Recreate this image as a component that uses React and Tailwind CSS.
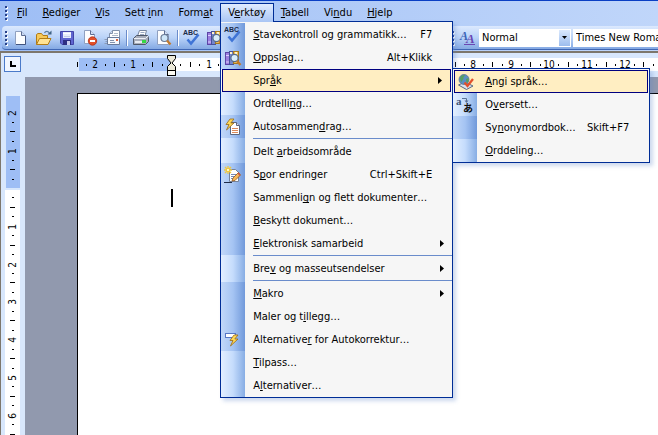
import React from "react";

const INK = "#000";

/* Text with an underlined access key: the letter after "&" is underlined. */
function Label({ text }) {
  const at = text.indexOf("&");
  if (at < 0) return <span>{text}</span>;
  return (
    <span>
      {text.slice(0, at)}
      <span className="underline decoration-1 underline-offset-1 [text-decoration-skip-ink:none]">{text[at + 1]}</span>
      {text.slice(at + 2)}
    </span>
  );
}

function Icon({ children }) {
  return (
    <svg width="16" height="16" viewBox="0 0 16 16" className="block shrink-0 overflow-visible" aria-hidden="true">
      {children}
    </svg>
  );
}

function Bolt({ x = 0, y = 0 }) {
  return (
    <path
      transform={`translate(${x} ${y})`}
      d="M5 0 L1 5.5 H4 L1.5 11 L9 4 H5.8 L9 0 Z"
      fill="#ffd957"
      stroke="#9a6a14"
      strokeWidth="0.8"
    />
  );
}

const NewIcon = () => (
  <Icon>
    <path d="M2.5 1.5 H8.5 L12.5 5.5 V14.5 H2.5 Z" fill="#fbfdff" stroke="#8fa0c0" />
    <path d="M8.5 1.5 V5.5 H12.5" fill="#cbd9f2" stroke="#5c6d93" />
    <path d="M12.5 6 V14.5 H3" fill="none" stroke="#41547f" />
  </Icon>
);

const OpenIcon = () => (
  <Icon>
    <path d="M0.5 14.5 V4.5 L2 3.5 H5.5 L7 5.5 H11.5 V8" fill="#f6c95a" stroke="#b27c16" />
    <path d="M0.5 14.5 L3.5 8.5 H15 L12 14.5 Z" fill="#ffe394" stroke="#b27c16" />
    <path d="M8.5 3 C9.5 0.8 12.5 0.6 13.5 3.5" fill="none" stroke="#5c7fa3" strokeWidth="1.3" />
    <path d="M11.5 4.5 H15.5 V0.5 Z" fill="#3f6285" />
  </Icon>
);

const SaveIcon = () => (
  <Icon>
    <path d="M1.5 1.5 H14.5 V14.5 H3 L1.5 13 Z" fill="#5f66d0" stroke="#4345a8" />
    <rect x="4" y="2" width="8" height="6" fill="#e8eefb" />
    <path d="M4 3.5 H12" stroke="#fff" />
    <path d="M5 6.5 H11" stroke="#c2cbe8" />
    <rect x="4" y="10" width="8" height="5" fill="#2d2f83" />
    <rect x="8" y="11" width="3" height="4" fill="#c9cff0" />
  </Icon>
);

const PermissionIcon = () => (
  <Icon>
    <path d="M2.5 0.5 H8.5 L12.5 4.5 V13.5 H2.5 Z" fill="#fcfdff" stroke="#8fa0c0" />
    <path d="M8.5 0.5 V4.5 H12.5" fill="#d2def3" stroke="#5c6d93" />
    <circle cx="10.5" cy="11" r="4.2" fill="#e2502a" stroke="#b02c12" strokeWidth="0.8" />
    <rect x="8" y="10" width="5" height="2" fill="#fff" />
  </Icon>
);

const MailIcon = () => (
  <Icon>
    <path d="M4.5 8 V3.5 L7.5 0.5 H14.5 V8 Z" fill="#fff" stroke="#8292ac" />
    <path d="M4.5 3.5 H7.5 V0.5" fill="#d2def3" stroke="#8292ac" />
    <path d="M9 3.5 H13 M7 5.5 H13" stroke="#b0bac9" />
    <path d="M2.5 7.5 H14.5 V14.5 H2.5 Z" fill="#f6f9fe" stroke="#687a9b" />
    <path d="M5 10.5 H9 M5 12.5 H10" stroke="#8292ac" />
    <path d="M-0.5 9.5 H2 M0.5 11.5 H2 M-0.5 13.5 H2" stroke="#8a9ab6" />
    <rect x="11" y="9" width="2" height="2" fill="#df643c" />
  </Icon>
);

const PrintIcon = () => (
  <Icon>
    <path d="M4.5 6 L6.5 0.5 H13.5 L12 6 Z" fill="#fff" stroke="#76859f" />
    <path d="M7.5 2.5 H11.5 M7 4.5 H11" stroke="#9ba9c2" />
    <path d="M0.5 8.5 L3.5 5.5 H14.5 L15.5 7.5 V11.5 L12.5 14.5 H0.5 Z" fill="#a7adbb" stroke="#4f5868" />
    <path d="M1 8.5 H12.5 L15 6" fill="none" stroke="#eef1f7" />
    <rect x="2" y="11" width="8" height="2" fill="#e8ecf2" />
    <rect x="9" y="10" width="4" height="3" fill="#35d944" />
  </Icon>
);

const PreviewIcon = () => (
  <Icon>
    <path d="M1.5 0.5 H8.5 L12.5 4.5 V14.5 H1.5 Z" fill="#fcfdff" stroke="#8fa0c0" />
    <path d="M8.5 0.5 V4.5 H12.5" fill="#d2def3" stroke="#5c6d93" />
    <circle cx="8.5" cy="8" r="3.5" fill="#cfe7fa" stroke="#6b7b96" strokeWidth="1.2" />
    <path d="M11 10.5 L14.5 14.5" stroke="#c47a2b" strokeWidth="2.2" />
  </Icon>
);

const SpellIcon = () => (
  <Icon>
    <text x="-1" y="5" fontSize="7" fontWeight="bold" fontFamily="Liberation Sans, sans-serif" fill="#1b2b49">
      ABC
    </text>
    <path d="M3.5 9.5 L7 13.5 L14.5 4.5" fill="none" stroke="#3f74d6" strokeWidth="2.6" />
  </Icon>
);

const ResearchIcon = () => (
  <Icon>
    <rect x="0.5" y="2.5" width="4" height="12" fill="#9b7fe0" stroke="#5c45a6" />
    <path d="M1 5.5 H4 M1 12 H4" stroke="#dcd0fb" />
    <rect x="4.5" y="1.5" width="4" height="13" fill="#7386cc" stroke="#45509a" />
    <rect x="8.5" y="1.5" width="5" height="12" fill="#f1c65c" stroke="#a7791e" />
    <path d="M6 2 V4 M11 2 V4" stroke="#fff4cf" strokeWidth="2" />
    <circle cx="9.5" cy="8" r="3.6" fill="#d9edfb" stroke="#566b8d" strokeWidth="1.2" />
    <path d="M12 11 L15.5 15" stroke="#c47a2b" strokeWidth="2.4" />
  </Icon>
);

const SummaryIcon = () => (
  <Icon>
    <path d="M5.5 3.5 H11.5 L14.5 6.5 V15.5 H5.5 Z" fill="#fff" stroke="#5b6780" />
    <path d="M11.5 3.5 V6.5 H14.5" fill="#d5def0" stroke="#5b6780" />
    <path d="M7 9.5 H13 M7 11.5 H13 M7 13.5 H13" stroke="#dc8a5b" />
    <Bolt />
  </Icon>
);

const TrackIcon = () => (
  <Icon>
    <path d="M4.5 2.5 H10.5 L13.5 5.5 V14.5 H4.5 Z" fill="#fff" stroke="#75829b" />
    <path d="M6 7.5 H12 M6 9.5 H12 M6 11.5 H10" stroke="#7688b3" />
    <path d="M3 -1 V7 M-1 3 H7 M0 0 L6 6 M6 0 L0 6" stroke="#f3c93e" strokeWidth="1.3" />
    <rect x="2" y="2" width="2" height="2" fill="#fff9c9" />
    <path d="M7 14 L8 11 L13.5 5.5 L15.5 8 L10 13.5 Z" fill="#f6b75a" stroke="#96591c" strokeWidth="0.8" />
    <path d="M12.5 6.5 L13.5 5.5 L15.5 8 L14.5 9 Z" fill="#cf5346" />
    <path d="M-1 15.5 H7" stroke="#1f2c4a" />
  </Icon>
);

const AutoCorrectIcon = () => (
  <Icon>
    <rect x="0.5" y="1.5" width="10" height="4" fill="#fff" stroke="#5577c5" />
    <Bolt x={4} y={3} />
  </Icon>
);

const LanguageIcon = () => (
  <Icon>
    <path d="M0.5 11 L7 8 L15 12 L8.5 15.5 Z" fill="#d9e1ee" stroke="#596882" />
    <circle cx="6" cy="5.5" r="5" fill="#5a8fc4" stroke="#5f7590" strokeWidth="0.8" />
    <path d="M2 4 C3 1 6 0.5 7 1.5 C6 3 5 3 5.5 5 C4 6 4 8 3 8 Z" fill="#57a060" />
    <path d="M8 5 L10.5 4 V7.5 L8.5 9 Z" fill="#57a060" />
    <path d="M6.5 8.5 L9.5 12 L15 5" fill="none" stroke="#e2502c" strokeWidth="2.3" />
  </Icon>
);

const TranslateIcon = () => (
  <Icon>
    <text x="-1" y="8" fontSize="11" fontWeight="bold" fontFamily="Liberation Serif, serif" fill="#3a5276">
      a
    </text>
    <path d="M5 1.5 H9.5 V4" fill="none" stroke="#5a7297" />
    <path d="M7.5 3.5 H11.5 L9.5 6 Z" fill="#5a7297" />
    <text x="6" y="15" fontSize="10" fontWeight="bold" fontFamily="'Noto Sans CJK JP', sans-serif" fill="#111">
      あ
    </text>
  </Icon>
);

const StylesIcon = () => (
  <Icon>
    <text x="0" y="10" fontSize="12" fontStyle="italic" fontWeight="bold" fontFamily="Liberation Serif, serif" fill="#3a63b6">
      A
    </text>
    <text x="6" y="13" fontSize="13" fontStyle="italic" fontWeight="bold" fontFamily="Liberation Serif, serif" fill="#6a46b2">
      A
    </text>
    <path d="M4 14.5 H15" stroke="#6a46b2" />
  </Icon>
);

const LANGUAGE_MENU = [
  { text: "&Angi språk…", icon: <LanguageIcon />, active: true },
  { text: "O&versett…", icon: <TranslateIcon /> },
  { text: "Sy&nonymordbok…", keys: "Skift+F7", rare: true },
  { text: "&Orddeling…" },
];

const TOOLS_MENU = [
  [
    { text: "&Stavekontroll og grammatikk…", keys: "F7", icon: <SpellIcon />, rare: true },
    { text: "&Oppslag…", keys: "Alt+Klikk", icon: <ResearchIcon />, rare: true },
    { text: "Spr&åk", active: true, submenu: LANGUAGE_MENU },
    { text: "Ordtelli&ng…" },
    { text: "Autosammen&drag…", icon: <SummaryIcon />, rare: true },
  ],
  [
    { text: "Delt &arbeidsområde" },
    { text: "S&por endringer", keys: "Ctrl+Skift+E", icon: <TrackIcon />, rare: true },
    { text: "Sammenli&gn og flett dokumenter…", rare: true },
    { text: "&Beskytt dokument…", rare: true },
    { text: "&Elektronisk samarbeid", more: true, rare: true },
  ],
  [{ text: "Bre&v og masseutsendelser", more: true }],
  [
    { text: "&Makro", more: true, rare: true },
    { text: "Maler og t&illegg…", rare: true },
    { text: "Alternative&r for Autokorrektur…", icon: <AutoCorrectIcon />, rare: true },
    { text: "&Tilpass…" },
    { text: "A&lternativer…" },
  ],
];

function MenuRow({ item }) {
  const arrow = item.more || item.submenu;
  const strip = item.rare
    ? "bg-linear-to-r from-[#c2d8f8] via-[#a5c4f3] to-[#7199da]"
    : "bg-linear-to-r from-[#e3efff] via-[#c5dcfc] to-[#87ade4]";
  return (
    <li className="relative">
      <button
        type="button"
        className={
          item.active
            ? "mx-px flex h-[23px] w-[calc(100%-2px)] items-center border border-[#000080] bg-[#ffeec2] text-left"
            : "flex h-[23px] w-full items-center bg-[#f6f6f6] text-left"
        }
      >
        <span
          className={`flex w-6 shrink-0 items-center justify-center self-stretch ${item.active ? "-mx-px" : strip}`}
        >
          {item.icon}
        </span>
        <span className="flex flex-1 justify-between pr-5 pl-2 whitespace-nowrap">
          <Label text={item.text} />
          {item.keys && <span>{item.keys}</span>}
        </span>
        {arrow && (
          <svg width="4" height="7" viewBox="0 0 4 7" className="mr-2 shrink-0" aria-hidden="true">
            <path d="M0 0 L4 3.5 L0 7 Z" fill={INK} />
          </svg>
        )}
      </button>
      {item.submenu && (
        <ul className="absolute -top-px left-full w-[198px] border border-[#002d96] bg-[#f6f6f6] pt-px shadow-[3px_3px_4px_rgba(90,130,200,0.3)]">
          {item.submenu.map((sub) => (
            <MenuRow key={sub.text} item={sub} />
          ))}
        </ul>
      )}
    </li>
  );
}

function ToolsMenu() {
  return (
    <div className="absolute top-[18px] left-0 z-10 w-[233px] border border-[#002d96] bg-[#f6f6f6] pt-px shadow-[3px_3px_4px_rgba(90,130,200,0.3)]">
      {TOOLS_MENU.map((group, i) => (
        <React.Fragment key={i}>
          {i > 0 && (
            <div className="flex h-[2px]">
              <div className="w-6 bg-linear-to-r from-[#e3efff] via-[#c5dcfc] to-[#87ade4]" />
              <div className="ml-2 h-px flex-1 bg-[#6a8ccb]" />
            </div>
          )}
          <ul>
            {group.map((item) => (
              <MenuRow key={item.text} item={item} />
            ))}
          </ul>
        </React.Fragment>
      ))}
    </div>
  );
}

const MENUS = ["&Fil", "&Rediger", "&Vis", "Sett &inn", "Form&at", "V&erktøy", "&Tabell", "Vi&ndu", "&Hjelp"];

function Grip() {
  return (
    <div className="mr-[2px] ml-[5px] flex w-[2px] shrink-0 flex-col gap-[2px]">
      {[0, 1, 2, 3].map((n) => (
        <span key={n} className="size-[2px] bg-[#27418a] shadow-[1px_1px_0_#fff]" />
      ))}
    </div>
  );
}

function MenuBar() {
  return (
    <nav className="flex h-[25px] items-start pt-[2px]">
      <div className="flex h-5 items-center"><Grip /></div>
      {MENUS.map((text) =>
        text === "V&erktøy" ? (
          <div key={text} className="relative -mr-px">
            <button
              type="button"
              className="relative z-20 flex h-[19px] items-center border border-b-0 border-[#002d96] bg-linear-to-b from-[#e1ecff] to-[#a9c5f4] px-[7px]"
            >
              <Label text={text} />
            </button>
            <ToolsMenu />
          </div>
        ) : (
          <button key={text} type="button" className="-mr-px flex h-[19px] items-center px-2">
            <Label text={text} />
          </button>
        ),
      )}
    </nav>
  );
}

const Divider = () => <div className="mx-[2px] h-4 w-px shrink-0 bg-[#6a8ccb] shadow-[1px_0_0_#fff]" />;

function Tool({ name, children }) {
  return (
    <button type="button" aria-label={name} className="flex h-[23px] w-[23px] shrink-0 items-center justify-center">
      {children}
    </button>
  );
}

function Combo({ name, value, className }) {
  return (
    <label className={`relative flex h-[18px] shrink-0 ${className}`}>
      <select
        aria-label={name}
        defaultValue={value}
        className="w-full appearance-none rounded-none bg-white pl-[3px] outline-none"
      >
        <option>{value}</option>
      </select>
      <span className="pointer-events-none absolute inset-y-px right-px flex w-[11px] items-center justify-center bg-linear-to-b from-[#dbe9fd] to-[#9dbdee]">
        <svg width="5" height="3" viewBox="0 0 5 3" aria-hidden="true">
          <path d="M0 0 H5 L2.5 3 Z" fill={INK} />
        </svg>
      </span>
    </label>
  );
}

const BAR = "flex h-6 items-center rounded-l-sm border-b border-[#3f67b5] bg-linear-to-b from-[#dce9fe] via-[#bad3f8] to-[#84a9e3]";

function Toolbars() {
  return (
    <div className="flex h-[25px] overflow-hidden pl-[2px]">
      <div className={`${BAR} w-[449px] shrink-0 rounded-r-sm`}>
        <div className="-ml-[2px]"><Grip /></div>
        <Tool name="Ny"><NewIcon /></Tool>
        <Tool name="Åpne"><OpenIcon /></Tool>
        <Tool name="Lagre"><SaveIcon /></Tool>
        <Tool name="Tillatelse"><PermissionIcon /></Tool>
        <Tool name="E-post"><MailIcon /></Tool>
        <Divider />
        <Tool name="Skriv ut"><PrintIcon /></Tool>
        <Tool name="Forhåndsvis"><PreviewIcon /></Tool>
        <Divider />
        <Tool name="Stavekontroll"><SpellIcon /></Tool>
        <Tool name="Oppslag"><ResearchIcon /></Tool>
      </div>
      <div className={`${BAR} flex-1 overflow-hidden`}>
        <div className="-ml-1"><Grip /></div>
        <Tool name="Stiler"><StylesIcon /></Tool>
        <Combo name="Stil" value="Normal" className="w-[92px]" />
        <Combo name="Skrift" value="Times New Roman" className="ml-[2px] w-[130px]" />
      </div>
    </div>
  );
}

/* Marks of a centimetre scale: number on each whole, line on each half, dot on each quarter. */
const CM = 37.8;
function marks(fromQuarter, toQuarter) {
  const list = [];
  for (let q = fromQuarter; q <= toQuarter; q += 1) {
    if (q !== 0) list.push({ q, pos: Math.round((q * CM) / 4), kind: q % 4 === 0 ? "number" : q % 2 === 0 ? "line" : "dot" });
  }
  return list;
}

function Scale({ from, to }) {
  return marks(from, to).map(({ q, pos, kind }) => {
    if (kind === "number") {
      return (
        <text key={q} x={pos} y="4" textAnchor="middle" fontSize="10" fill={INK}>
          {Math.abs(q / 4)}
        </text>
      );
    }
    return kind === "line" ? (
      <rect key={q} x={pos} y="-2" width="1" height="5" fill={INK} />
    ) : (
      <rect key={q} x={pos} y="0" width="1" height="2" fill={INK} />
    );
  });
}

function HorizontalRuler() {
  return (
    <div className="flex h-6 items-start bg-[#d8e7fc]">
      <button
        type="button"
        aria-label="Tabulator"
        className="mt-[3px] ml-[3px] flex h-4 w-[17px] shrink-0 items-center justify-center border border-[#4a7ac9] bg-[#f0f6ff]"
      >
        <span className="h-[6px] w-[6px] border-b-2 border-l-2 border-black" />
      </button>
      <svg className="ml-[56px] h-6 min-w-0 flex-1" aria-hidden="true">
        <rect x="2" y="5" width="93" height="13" fill="#9ebef5" />
        <rect x="95" y="5" width="100%" height="13" fill="#fff" />
        <g transform="translate(94 11)">
          <Scale from={-10} to={51} />
        </g>
        <path d="M90.5 2.5 H98.5 V5.5 L95 10 L98.5 13.5 V17.5 H90.5 V13.5 L94 10 L90.5 5.5 Z" fill="#ece9d8" stroke={INK} />
        <rect x="90.5" y="17.5" width="8" height="5" fill="#fbfaf2" stroke={INK} />
      </svg>
    </div>
  );
}

function VerticalRuler() {
  return (
    <svg className="w-6 shrink-0 self-stretch bg-[#d8e7fc]" aria-hidden="true">
      <rect x="5" y="19" width="14" height="92" fill="#9ebef5" />
      <rect x="4" y="113" width="15" height="100%" fill="#fff" />
      <g transform="translate(11 112) rotate(-90)">
        <Scale from={-26} to={8} />
      </g>
    </svg>
  );
}

export default function App() {
  return (
    <div className="flex h-screen flex-col overflow-hidden border-t border-[#0a3fc4] bg-linear-to-r from-[#9ebef5] to-[#c0d6fa] font-['DejaVu_Sans_Condensed','DejaVu_Sans',sans-serif] text-[11px] leading-[14px] text-black">
      <MenuBar />
      <Toolbars />
      <div className="flex min-h-0 flex-1 flex-col border-t-2 border-l border-[#7d776c]">
        <HorizontalRuler />
        <main className="flex min-h-0 flex-1 bg-[#9199ae]">
          <VerticalRuler />
          <div className="mt-4 ml-[52px] flex-1 border-t border-l border-black bg-white pt-[95px] pl-[93px]">
            <div className="h-[18px] w-[2px] bg-black" />
          </div>
        </main>
      </div>
    </div>
  );
}
